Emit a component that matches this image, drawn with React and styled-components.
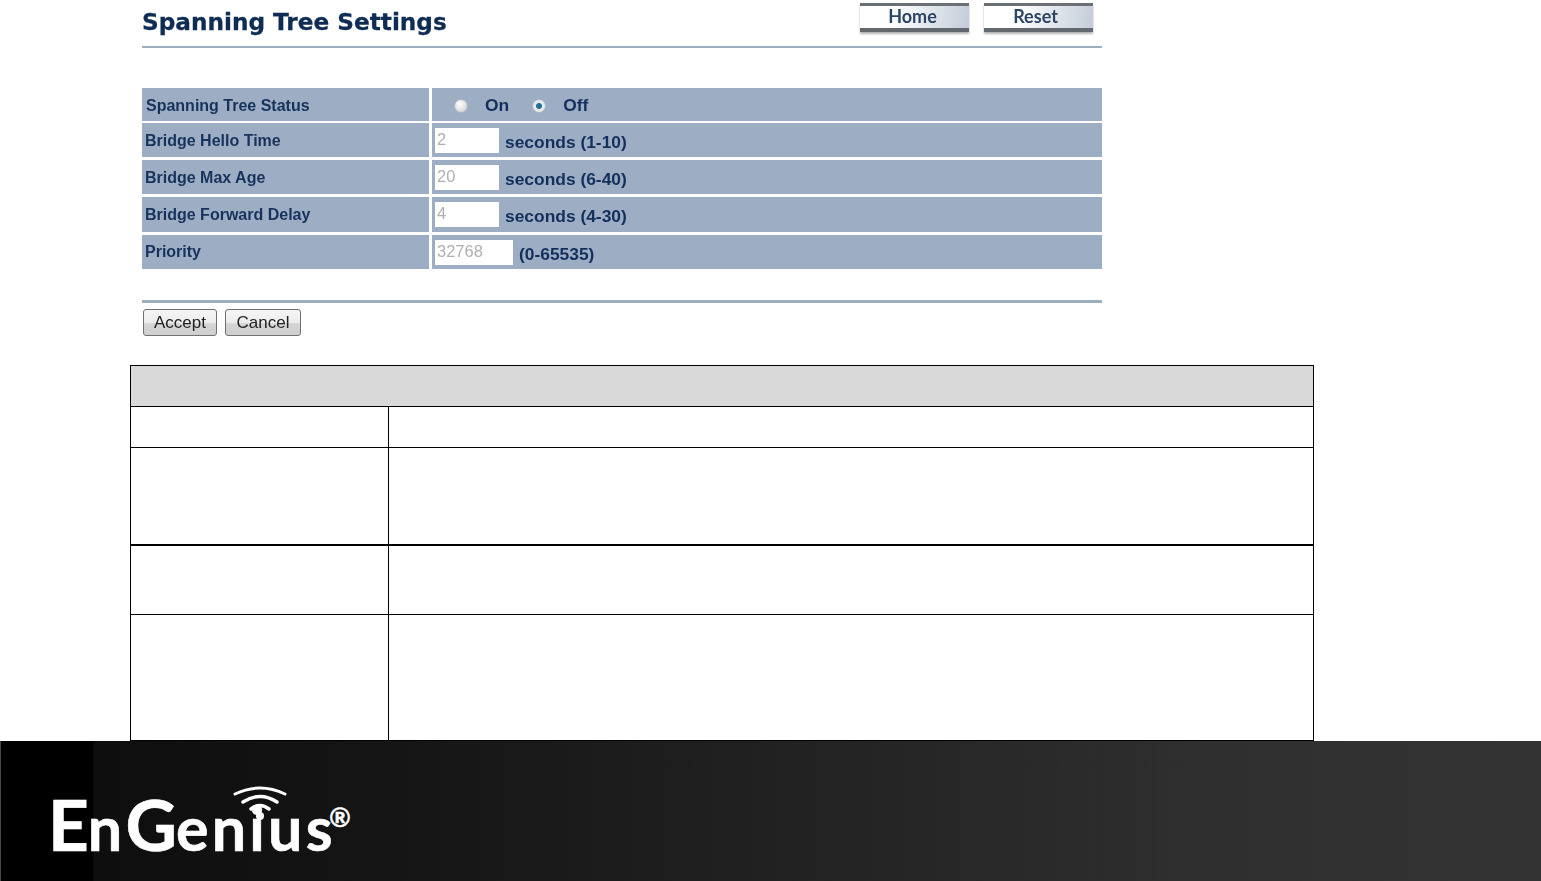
import styled, { createGlobalStyle } from "styled-components";

const GlobalStyle = createGlobalStyle`
  html, body {
    margin: 0;
    padding: 0;
    background: #fff;
  }
`;

const Page = styled.div`
  display: flex;
  flex-direction: column;
  width: 1541px;
  height: 881px;
  overflow: hidden;
`;

const Panel = styled.div`
  display: flex;
  flex-direction: column;
  box-sizing: border-box;
  width: 960px;
  height: 365px;
  margin-left: 142px;
  font-family: "Liberation Sans", Arial, sans-serif;
  color: #16325c;
  filter: blur(0.4px);
`;

const Header = styled.div`
  display: flex;
  justify-content: space-between;
  box-sizing: border-box;
  height: 48px;
  padding-top: 3px;
  border-bottom: 2px solid #9eadc0;
`;

const Title = styled.h1`
  margin: 0;
  padding-top: 5px;
  font: bold 23.2px/28px "DejaVu Sans", Verdana, sans-serif;
  color: #0f2c55;
  -webkit-text-stroke: 0.3px #0f2c55;
`;

const NavButtons = styled.div`
  display: flex;
  gap: 15px;
  margin-right: 9px;
`;

const NavButton = styled.div`
  box-sizing: border-box;
  width: 109px;
  height: 29px;
  padding-right: ${(p) => (p.$shift ? "6px" : "4px")};
  text-align: center;
  font: bold 18px/21px Lato, sans-serif;
  color: #2c4564;
  border-top: 3px solid #6b6f76;
  border-bottom: 4px solid #63676e;
  background: linear-gradient(100deg, #ffffff 30%, #c3ccd9 100%);
  box-shadow: 0 2px 2px rgba(0, 0, 0, 0.3);
`;

const SettingsTable = styled.div`
  display: flex;
  flex-direction: column;
  margin-top: 40px;
`;

const SettingsRow = styled.div`
  display: grid;
  grid-template-columns: 287px 670px;
  column-gap: 3px;
  height: ${(p) => p.$h}px;
  margin-bottom: ${(p) => p.$gap}px;
`;

const LabelCell = styled.div`
  display: flex;
  align-items: center;
  padding-left: ${(p) => (p.$first ? "4px" : "3px")};
  padding-top: ${(p) => (p.$low ? "2px" : "0")};
  background: #9dadc4;
  font-size: 16px;
  font-weight: bold;
  color: #17335c;
`;

const ValueCell = styled.div`
  display: flex;
  align-items: center;
  padding-left: ${(p) => (p.$radios ? "2px" : "3px")};
  padding-top: ${(p) => (p.$radios ? "2px" : "0")};
  background: #9dadc4;
  font-size: 17.4px;
  font-weight: bold;
  color: #13305c;
`;

const Radio = styled.span`
  box-sizing: border-box;
  display: block;
  width: 14px;
  height: 14px;
  margin-left: ${(p) => p.$ml}px;
  margin-right: 17px;
  border-radius: 50%;
  border: 1px solid #aeb6c0;
  background: ${(p) =>
    p.$checked
      ? "radial-gradient(circle, #1f6f97 0 2.5px, #e6eaef 3.5px)"
      : "radial-gradient(circle at 40% 35%, #fff, #c9c9c9)"};
`;

const RadioLabel = styled.span`
  margin-right: ${(p) => p.$mr}px;
`;

const NumberBox = styled.div`
  box-sizing: border-box;
  width: ${(p) => p.$w}px;
  height: 25px;
  margin-right: 6px;
  padding-left: 2px;
  background: #fff;
  font-size: 16.5px;
  font-weight: normal;
  line-height: 23px;
  color: #b0b0b0;
`;

const Hint = styled.span`
  position: relative;
  top: 2px;
`;

const Footer = styled.div`
  display: flex;
  flex-direction: column;
  border-top: 3px solid #9eadc0;
  margin-top: 31px;
`;

const FormButtons = styled.div`
  display: flex;
  gap: 8px;
  margin: 6px 0 0 1px;
`;

const FormButton = styled.div`
  box-sizing: border-box;
  width: ${(p) => p.$w}px;
  height: 27px;
  border: 1px solid #707070;
  border-radius: 3px;
  background: linear-gradient(#f6f6f6 0%, #ececec 50%, #d4d4d4 55%, #cfcfcf 100%);
  text-align: center;
  font-size: 17px;
  line-height: 25px;
  color: #222;
`;

const DocTable = styled.div`
  box-sizing: border-box;
  display: grid;
  grid-template-columns: 258px 1fr;
  grid-template-rows: 41px 41px 98px 69px 1fr;
  width: 1184px;
  height: 376px;
  margin-left: 130px;
  border-top: 1px solid #000;
  border-left: 1px solid #000;
  border-right: 1px solid #000;
`;

const DocHead = styled.div`
  grid-column: 1 / span 2;
  background: #d9d9d9;
  border-bottom: 1px solid #000;
`;

const DocCell = styled.div`
  border-bottom: ${(p) => (p.$heavy ? "2px" : "1px")} solid #000;
  border-right: ${(p) => (p.$left ? "1px solid #000" : "none")};
`;

const Banner = styled.div`
  display: flex;
  box-sizing: border-box;
  height: 140px;
  padding: 45px 0 0 48px;
  background:
    linear-gradient(90deg, #4a4a4a 0, #4a4a4a 1px, #000 1px, #000 93px, rgba(0, 0, 0, 0) 94px),
    linear-gradient(90deg, #0e0e0e 94px, #151515 400px, #222 800px, #2f2f2f 1200px, #333 1541px);
`;

const Logo = styled.div`
  position: relative;
  width: 310px;
  height: 70px;
  padding-top: 5px;
  font: 700 61px/66px Lato, sans-serif;
  letter-spacing: 3.2px;
  color: #fff;
  -webkit-text-stroke: 0.6px #fff;
`;

const LogoCap = styled.span`
  font-size: 71px;
  font-weight: 700;
  letter-spacing: -1px;
`;

const WifiMark = styled.svg`
  position: absolute;
  left: 184px;
  top: -1px;
`;

const Registered = styled.span`
  position: absolute;
  left: 282px;
  top: 19px;
  font: bold 27px/27px "Liberation Sans", sans-serif;
  letter-spacing: 0;
`;

const settings = [
  { label: "Bridge Hello Time", value: "2", hint: "seconds (1-10)", w: 64, h: 34, gap: 3, low: true },
  { label: "Bridge Max Age", value: "20", hint: "seconds (6-40)", w: 64, h: 34, gap: 3, low: true },
  { label: "Bridge Forward Delay", value: "4", hint: "seconds (4-30)", w: 64, h: 35, gap: 3 },
  { label: "Priority", value: "32768", hint: "(0-65535)", w: 78, h: 34, gap: 0 },
];

function App() {
  return (
    <Page>
      <GlobalStyle />
      <Panel>
        <Header>
          <Title>Spanning Tree Settings</Title>
          <NavButtons>
            <NavButton>Home</NavButton>
            <NavButton $shift>Reset</NavButton>
          </NavButtons>
        </Header>
        <SettingsTable>
          <SettingsRow $h={33} $gap={2}>
            <LabelCell $first $low>Spanning Tree Status</LabelCell>
            <ValueCell $radios>
              <Radio $ml={20} />
              <RadioLabel $mr={23}>On</RadioLabel>
              <Radio $ml={0} $checked />
              <RadioLabel>Off</RadioLabel>
            </ValueCell>
          </SettingsRow>
          {settings.map((s) => (
            <SettingsRow key={s.label} $h={s.h} $gap={s.gap}>
              <LabelCell $low={s.low}>{s.label}</LabelCell>
              <ValueCell>
                <NumberBox $w={s.w}>{s.value}</NumberBox>
                <Hint>{s.hint}</Hint>
              </ValueCell>
            </SettingsRow>
          ))}
        </SettingsTable>
        <Footer>
          <FormButtons>
            <FormButton $w={74}>Accept</FormButton>
            <FormButton $w={76}>Cancel</FormButton>
          </FormButtons>
        </Footer>
      </Panel>
      <DocTable>
        <DocHead />
        <DocCell $left />
        <DocCell />
        <DocCell $left $heavy />
        <DocCell $heavy />
        <DocCell $left />
        <DocCell />
        <DocCell $left />
        <DocCell />
      </DocTable>
      <Banner>
        <Logo>
          <LogoCap>E</LogoCap>n<LogoCap>G</LogoCap>enius
          <WifiMark width="56" height="36" viewBox="0 0 56 36" fill="none" stroke="#fff" strokeLinecap="round">
            <path d="M3 9 Q28 -3 53 9" strokeWidth="3" />
            <path d="M11 17 Q28 6 45 17" strokeWidth="3.5" />
            <path d="M19 24 Q28 17 37 24" strokeWidth="3.5" />
            <circle cx="28" cy="31" r="4" fill="#fff" stroke="none" />
          </WifiMark>
          <Registered>®</Registered>
        </Logo>
      </Banner>
    </Page>
  );
}

export default App;
